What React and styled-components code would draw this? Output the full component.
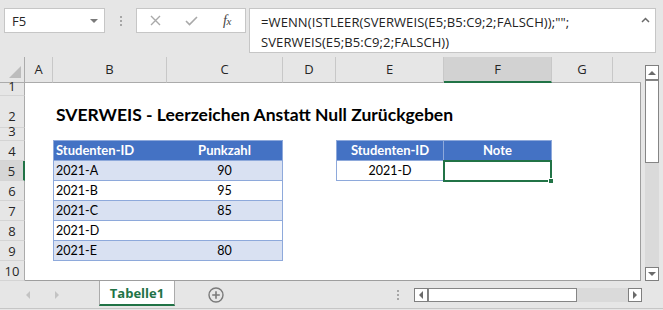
import React from 'react';
import styled, { createGlobalStyle, css } from 'styled-components';

const Global = createGlobalStyle`
  html, body { margin: 0; padding: 0; background: #e6e6e6; }
  body { font-family: "Open Sans", "Noto Sans", sans-serif; color: #262626; }
  * { box-sizing: border-box; }
`;

const Window = styled.div`
  width: 663px;
  height: 310px;
  display: flex;
  flex-direction: column;
  background: #e6e6e6;
  overflow: hidden;
`;

/* ---------- formula toolbar ---------- */
const Toolbar = styled.div`
  height: 57px;
  flex-shrink: 0;
  display: flex;
  align-items: flex-start;
  padding: 8px 0 0 4px;
`;

const NameBox = styled.div`
  width: 101px;
  height: 25px;
  background: #fff;
  border: 1px solid #c6c6c6;
  display: flex;
  align-items: center;
  justify-content: space-between;
  padding: 0 6px 0 7px;
  font-size: 13px;
  color: #262626;
`;

const DropArrow = styled.span`
  width: 0;
  height: 0;
  border-left: 4px solid transparent;
  border-right: 4px solid transparent;
  border-top: 4px solid #7a7a7a;
`;

const Grip = styled.div`
  width: ${p => p.$w || 31}px;
  height: 25px;
  display: flex;
  flex-direction: column;
  align-items: center;
  justify-content: center;
  gap: 2px;
  & > i {
    width: 2px;
    height: 2px;
    background: #a6a6a6;
  }
`;

const FxBox = styled.div`
  width: 110px;
  height: 25px;
  background: #fff;
  border: 1px solid #c6c6c6;
  display: grid;
  grid-template-columns: repeat(3, 1fr);
  align-items: center;
  justify-items: center;
`;

const FxLabel = styled.span`
  font-family: "Liberation Serif", "DejaVu Serif", serif;
  font-style: italic;
  font-size: 14px;
  color: #444;
  letter-spacing: -0.5px;
  & > small { font-size: 11px; }
`;

const FormulaBar = styled.div`
  position: relative;
  margin-left: 3px;
  width: 407px;
  height: 45px;
  background: #fff;
  border: 1px solid #c6c6c6;
  padding: 3px 0 0 11px;
`;

const FormulaLine = styled.div`
  font-size: 13px;
  line-height: 20px;
  color: #222;
  white-space: nowrap;
  letter-spacing: 0.1px;
`;

const Collapse = styled.svg`
  position: absolute;
  right: 5px;
  top: 8px;
`;

/* ---------- sheet ---------- */
const SheetArea = styled.div`
  height: 224px;
  flex-shrink: 0;
  display: flex;
`;

const Grid = styled.div`
  width: 641px;
  display: grid;
  grid-template-columns: 25px 28px 114px 116px 53px 108px 108px 61px 28px;
  grid-template-rows: 26px 13px 32px 13px repeat(7, 20px);
`;

const SheetBody = styled.div`
  grid-column: 2 / -1;
  grid-row: 2 / -1;
  background: #fff;
  border-right: 1px solid #9e9e9e;
  border-bottom: 1px solid #9e9e9e;
`;

const Corner = styled.div`
  grid-column: 1;
  grid-row: 1;
  border-right: 1px solid #ababab;
  border-bottom: 1px solid #ababab;
  display: flex;
  align-items: flex-end;
  justify-content: flex-end;
  padding: 0 3px 4px 0;
`;

const CornerTri = styled.span`
  width: 0;
  height: 0;
  border-left: 12px solid transparent;
  border-bottom: 12px solid #bcbcbc;
`;

const ColHead = styled.div`
  grid-row: 1;
  grid-column: ${p => p.$col};
  display: flex;
  align-items: flex-end;
  justify-content: center;
  padding-bottom: 4px;
  font-size: 13px;
  color: #262626;
  border-bottom: 1px solid #ababab;
  border-right: ${p => (p.$last ? 'none' : '1px solid #c8c8c8')};
  ${p => p.$selected && css`
    background: #d2d2d2;
    border-bottom: 2px solid #217346;
    padding-bottom: 3px;
  `}
`;

const RowHead = styled.div`
  grid-column: 1;
  grid-row: ${p => p.$row};
  display: flex;
  align-items: flex-end;
  justify-content: center;
  font-size: 13px;
  line-height: 9px;
  padding-bottom: ${p => (p.$row === 3 ? 6 : 4)}px;
  color: #262626;
  border-right: 1px solid #ababab;
  border-bottom: 1px solid #d4d4d4;
  ${p => p.$selected && css`
    background: #d6d6d6;
    border-right: 2px solid #217346;
  `}
`;

const Title = styled.div`
  grid-column: 3 / 9;
  grid-row: 3;
  align-self: end;
  padding: 0 0 2px 3px;
  font-family: "Lato", sans-serif;
  font-weight: 700;
  font-size: 17.5px;
  line-height: 22px;
  color: #000;
  white-space: nowrap;
`;

const TableBlock = styled.div`
  grid-column: ${p => p.$cols};
  grid-row: ${p => p.$rows};
  display: flex;
  flex-direction: column;
`;

const TRow = styled.div`
  height: 20px;
  display: grid;
  grid-template-columns: ${p => p.$template};
  border-left: 1px solid #8ea9db;
  border-right: 1px solid #8ea9db;
  border-bottom: 1px solid #8ea9db;
  background: ${p => (p.$head ? '#4472c4' : p.$band ? '#d9e1f2' : '#fff')};
  ${p => p.$head && css`
    border-top: 1px solid #8ea9db;
    height: 21px;
    margin-top: -1px;
  `}
`;

const TCell = styled.div`
  display: flex;
  align-items: flex-end;
  justify-content: ${p => (p.$center ? 'center' : 'flex-start')};
  padding: 0 2px 1px 2px;
  font-family: "Lato", sans-serif;
  font-size: ${p => (p.$head ? 13 : 12.5)}px;
  line-height: 17px;
  font-weight: ${p => (p.$head ? 700 : 400)};
  color: ${p => (p.$head ? '#fff' : '#000')};
  white-space: nowrap;
  ${p => p.$divider && css`border-right: 1px solid #8ea9db;`}
`;

const Selection = styled.div`
  grid-column: 7;
  grid-row: 6;
  margin: -1px 0 -1px -1px;
  border: 2px solid #217346;
  position: relative;
`;

const FillHandle = styled.span`
  position: absolute;
  right: -4px;
  bottom: -4px;
  width: 6px;
  height: 6px;
  background: #217346;
  border: 1px solid #fff;
`;

/* ---------- scrollbars ---------- */
const VScroll = styled.div`
  width: 22px;
  display: flex;
  flex-direction: column;
  padding: 8px 4px 0 4px;
`;

const ScrollBtn = styled.div`
  width: ${p => p.$w || 14}px;
  height: ${p => p.$h || 14}px;
  flex-shrink: 0;
  background: #fff;
  border: 1px solid #7f7f7f;
  display: flex;
  align-items: center;
  justify-content: center;
`;

const Arrow = styled.span`
  width: 0;
  height: 0;
  ${p => p.$dir === 'up' && css`
    border-left: 4px solid transparent;
    border-right: 4px solid transparent;
    border-bottom: 4px solid #6a6a6a;
  `}
  ${p => p.$dir === 'down' && css`
    border-left: 4px solid transparent;
    border-right: 4px solid transparent;
    border-top: 4px solid #6a6a6a;
  `}
  ${p => p.$dir === 'left' && css`
    border-top: 4px solid transparent;
    border-bottom: 4px solid transparent;
    border-right: 4px solid ${p.$light ? '#c3c3c3' : '#6a6a6a'};
  `}
  ${p => p.$dir === 'right' && css`
    border-top: 4px solid transparent;
    border-bottom: 4px solid transparent;
    border-left: 4px solid ${p.$light ? '#c3c3c3' : '#6a6a6a'};
  `}
`;

const Thumb = styled.div`
  flex-shrink: 0;
  background: #fff;
  border: 1px solid #858585;
  ${p => (p.$vertical ? css`height: 83px; width: 14px;` : css`width: 149px; height: 14px;`)}
`;

const Track = styled.div`
  flex: 1;
  background: #dadada;
`;

/* ---------- tab bar ---------- */
const TabBar = styled.div`
  height: 28px;
  flex-shrink: 0;
  display: flex;
  align-items: flex-start;
  border-bottom: 1px solid #c6c6c6;
`;

const TabNav = styled.div`
  width: 99px;
  height: 28px;
  display: flex;
  align-items: center;
  gap: 25px;
  padding-left: 26px;
`;

const SheetTab = styled.div`
  width: 76px;
  height: 25px;
  background: #fff;
  border-left: 1px solid #ababab;
  border-right: 1px solid #ababab;
  border-bottom: 2px solid #217346;
  display: flex;
  align-items: center;
  justify-content: center;
  padding-top: 1px;
  font-size: 13px;
  font-weight: 700;
  color: #217346;
`;

const AddSheet = styled.svg`
  margin: 6px 0 0 33px;
`;

const Spacer = styled.div`
  flex: 1;
`;

const HScroll = styled.div`
  display: flex;
  width: 228px;
  height: 14px;
  margin: 7px 21px 0 8px;
`;

const TabGrip = styled(Grip)`
  height: 28px;
`;

const cols = ['A', 'B', 'C', 'D', 'E', 'F', 'G', ''];
const rows = [1, 2, 3, 4, 5, 6, 7, 8, 9, 10];

const list = [
  ['2021-A', '90'],
  ['2021-B', '95'],
  ['2021-C', '85'],
  ['2021-D', ''],
  ['2021-E', '80'],
];

export default function App() {
  return (
    <>
      <Global />
      <Window>
        <Toolbar>
          <NameBox>
            F5
            <DropArrow />
          </NameBox>
          <Grip><i /><i /><i /></Grip>
          <FxBox>
            <svg width="11" height="11" viewBox="0 0 11 11">
              <path d="M1 1 L10 10 M10 1 L1 10" stroke="#a9a9a9" strokeWidth="1.4" fill="none" />
            </svg>
            <svg width="13" height="10" viewBox="0 0 13 10">
              <path d="M1 5 L4.5 8.5 L12 1" stroke="#a9a9a9" strokeWidth="1.6" fill="none" />
            </svg>
            <FxLabel>f<small>x</small></FxLabel>
          </FxBox>
          <FormulaBar>
            <FormulaLine>=WENN(ISTLEER(SVERWEIS(E5;B5:C9;2;FALSCH));"";</FormulaLine>
            <FormulaLine>SVERWEIS(E5;B5:C9;2;FALSCH))</FormulaLine>
            <Collapse width="9" height="6" viewBox="0 0 9 6">
              <path d="M1 5 L4.5 1.5 L8 5" stroke="#6a6a6a" strokeWidth="1.5" fill="none" />
            </Collapse>
          </FormulaBar>
        </Toolbar>

        <SheetArea>
          <Grid>
            <SheetBody />
            <Corner><CornerTri /></Corner>
            {cols.map((c, i) => (
              <ColHead key={i} $col={i + 2} $selected={c === 'F'} $last={i === cols.length - 1}>
                {c}
              </ColHead>
            ))}
            {rows.map(r => (
              <RowHead key={r} $row={r + 1} $selected={r === 5}>{r}</RowHead>
            ))}
            <Title>SVERWEIS - Leerzeichen Anstatt Null Zurückgeben</Title>

            <TableBlock $cols="3 / 5" $rows="5 / 11">
              <TRow $head $template="113px 115px">
                <TCell $head>Studenten-ID</TCell>
                <TCell $head $center>Punkzahl</TCell>
              </TRow>
              {list.map(([id, pts], i) => (
                <TRow key={id} $band={i % 2 === 0} $template="113px 115px">
                  <TCell>{id}</TCell>
                  <TCell $center>{pts}</TCell>
                </TRow>
              ))}
            </TableBlock>

            <TableBlock $cols="6 / 8" $rows="5 / 7">
              <TRow $head $template="107px 107px">
                <TCell $head $center $divider>Studenten-ID</TCell>
                <TCell $head $center>Note</TCell>
              </TRow>
              <TRow $template="107px 107px">
                <TCell $center $divider>2021-D</TCell>
                <TCell $center></TCell>
              </TRow>
            </TableBlock>

            <Selection><FillHandle /></Selection>
          </Grid>

          <VScroll>
            <ScrollBtn $h={15}><Arrow $dir="up" /></ScrollBtn>
            <Thumb $vertical />
            <Track />
            <ScrollBtn><Arrow $dir="down" /></ScrollBtn>
          </VScroll>
        </SheetArea>

        <TabBar>
          <TabNav>
            <Arrow $dir="left" $light />
            <Arrow $dir="right" $light />
          </TabNav>
          <SheetTab>Tabelle1</SheetTab>
          <AddSheet width="16" height="16" viewBox="0 0 16 16">
            <circle cx="8" cy="8" r="7" stroke="#7a7a7a" strokeWidth="1.4" fill="none" />
            <path d="M8 4.2 V11.8 M4.2 8 H11.8" stroke="#7a7a7a" strokeWidth="1.6" />
          </AddSheet>
          <Spacer />
          <TabGrip $w={16}><i /><i /><i /></TabGrip>
          <HScroll>
            <ScrollBtn><Arrow $dir="left" /></ScrollBtn>
            <Thumb />
            <Track />
            <ScrollBtn><Arrow $dir="right" /></ScrollBtn>
          </HScroll>
        </TabBar>
      </Window>
    </>
  );
}
